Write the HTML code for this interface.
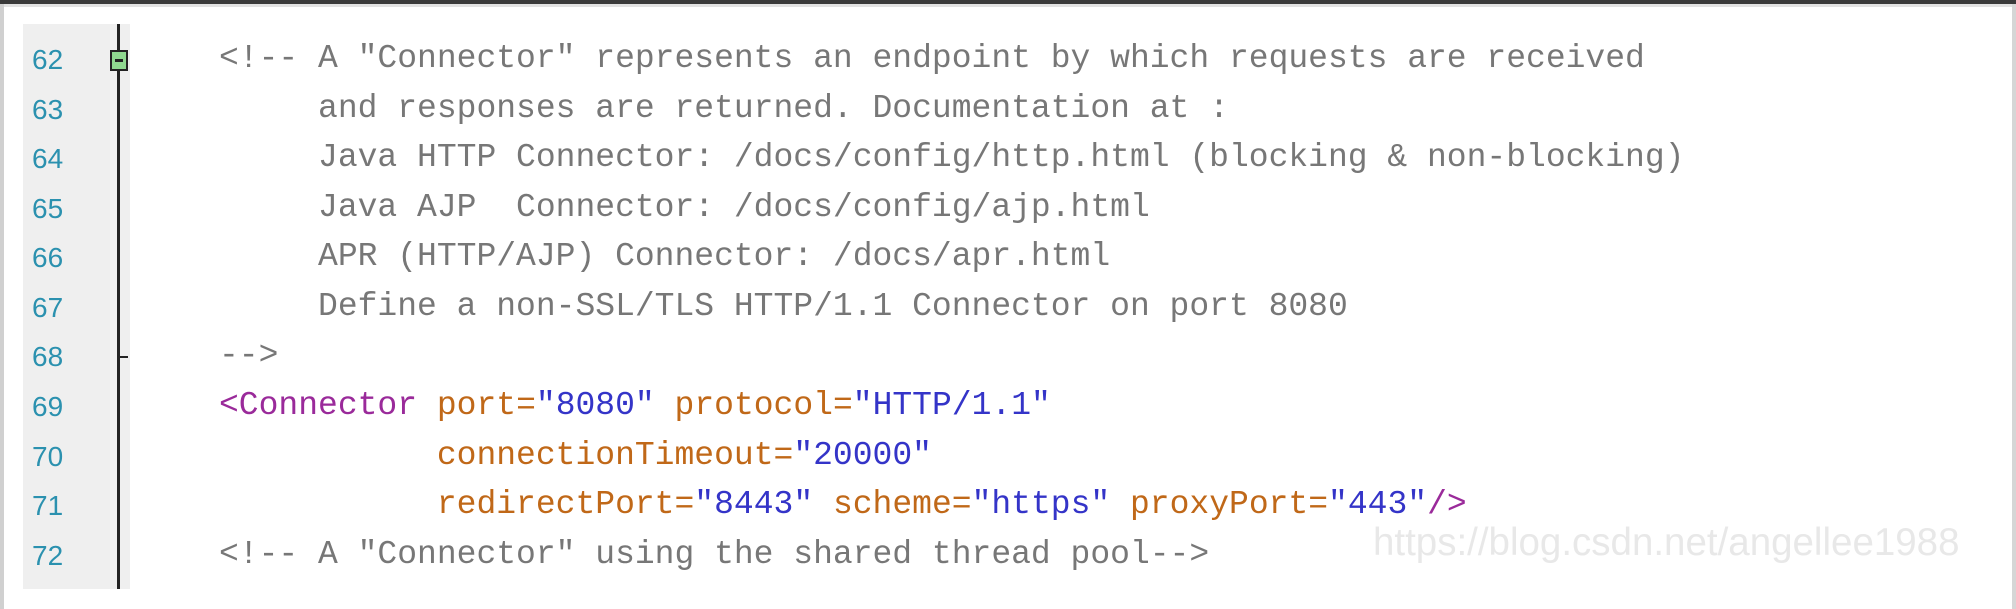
<!DOCTYPE html>
<html><head><meta charset="utf-8"><style>
html,body{margin:0;padding:0;}
body{width:2016px;height:609px;background:#fff;position:relative;overflow:hidden;font-family:"Liberation Mono",monospace;}
.top{position:absolute;left:0;top:0;width:2016px;height:4px;background:#3a3a3a;}
.top2{position:absolute;left:0;top:4px;width:2016px;height:3px;background:#e2e2e2;}
.lb{position:absolute;left:0;top:4px;width:4px;height:605px;background:#d0d0d0;}
.rb{position:absolute;left:2012px;top:4px;width:4px;height:605px;background:#d6d6d6;}
.gut{position:absolute;left:23px;top:24px;width:107px;height:565px;background:#efefef;}
.fl{position:absolute;left:117px;top:24px;width:3px;height:565px;background:#222;}
.fb{position:absolute;left:110px;top:50px;width:18px;height:21px;background:#8fd88f;border:2px solid #222;box-sizing:border-box;}
.fb:after{content:"";position:absolute;left:3px;top:7px;width:8px;height:3px;background:#222;}
.tick{position:absolute;left:118px;top:356px;width:10px;height:2px;background:#222;}
.ln{position:absolute;left:32px;font-size:28px;color:#2b91af;font-family:"Liberation Sans",sans-serif;}
.c{position:absolute;left:219px;font-size:33px;white-space:pre;color:#777;}
.t{color:#9a2a9a}.a{color:#c06818}.v{color:#3434c8}
.wm{position:absolute;left:1373px;top:521px;font-family:"Liberation Sans",sans-serif;font-size:38.5px;color:#e8e8e8;}
</style></head><body>
<div class="top"></div><div class="top2"></div><div class="lb"></div><div class="rb"></div>
<div class="gut"></div><div class="fl"></div><div class="fb"></div><div class="tick"></div>
<div class="ln" style="top:44px">62</div>
<div class="ln" style="top:94px">63</div>
<div class="ln" style="top:143px">64</div>
<div class="ln" style="top:193px">65</div>
<div class="ln" style="top:242px">66</div>
<div class="ln" style="top:292px">67</div>
<div class="ln" style="top:341px">68</div>
<div class="ln" style="top:391px">69</div>
<div class="ln" style="top:441px">70</div>
<div class="ln" style="top:490px">71</div>
<div class="ln" style="top:540px">72</div>
<div class="c" style="top:40px">&lt;!-- A "Connector" represents an endpoint by which requests are received</div>
<div class="c" style="top:90px">     and responses are returned. Documentation at :</div>
<div class="c" style="top:139px">     Java HTTP Connector: /docs/config/http.html (blocking &amp; non-blocking)</div>
<div class="c" style="top:189px">     Java AJP  Connector: /docs/config/ajp.html</div>
<div class="c" style="top:238px">     APR (HTTP/AJP) Connector: /docs/apr.html</div>
<div class="c" style="top:288px">     Define a non-SSL/TLS HTTP/1.1 Connector on port 8080</div>
<div class="c" style="top:337px">--&gt;</div>
<div class="c" style="top:387px"><span class="t">&lt;Connector</span> <span class="a">port=</span><span class="v">"8080"</span> <span class="a">protocol=</span><span class="v">"HTTP/1.1"</span></div>
<div class="c" style="top:437px">           <span class="a">connectionTimeout=</span><span class="v">"20000"</span></div>
<div class="c" style="top:486px">           <span class="a">redirectPort=</span><span class="v">"8443"</span> <span class="a">scheme=</span><span class="v">"https"</span> <span class="a">proxyPort=</span><span class="v">"443"</span><span class="t">/&gt;</span></div>
<div class="c" style="top:536px">&lt;!-- A "Connector" using the shared thread pool--&gt;</div>
<div class="wm">https://blog.csdn.net/angellee1988</div>
</body></html>
